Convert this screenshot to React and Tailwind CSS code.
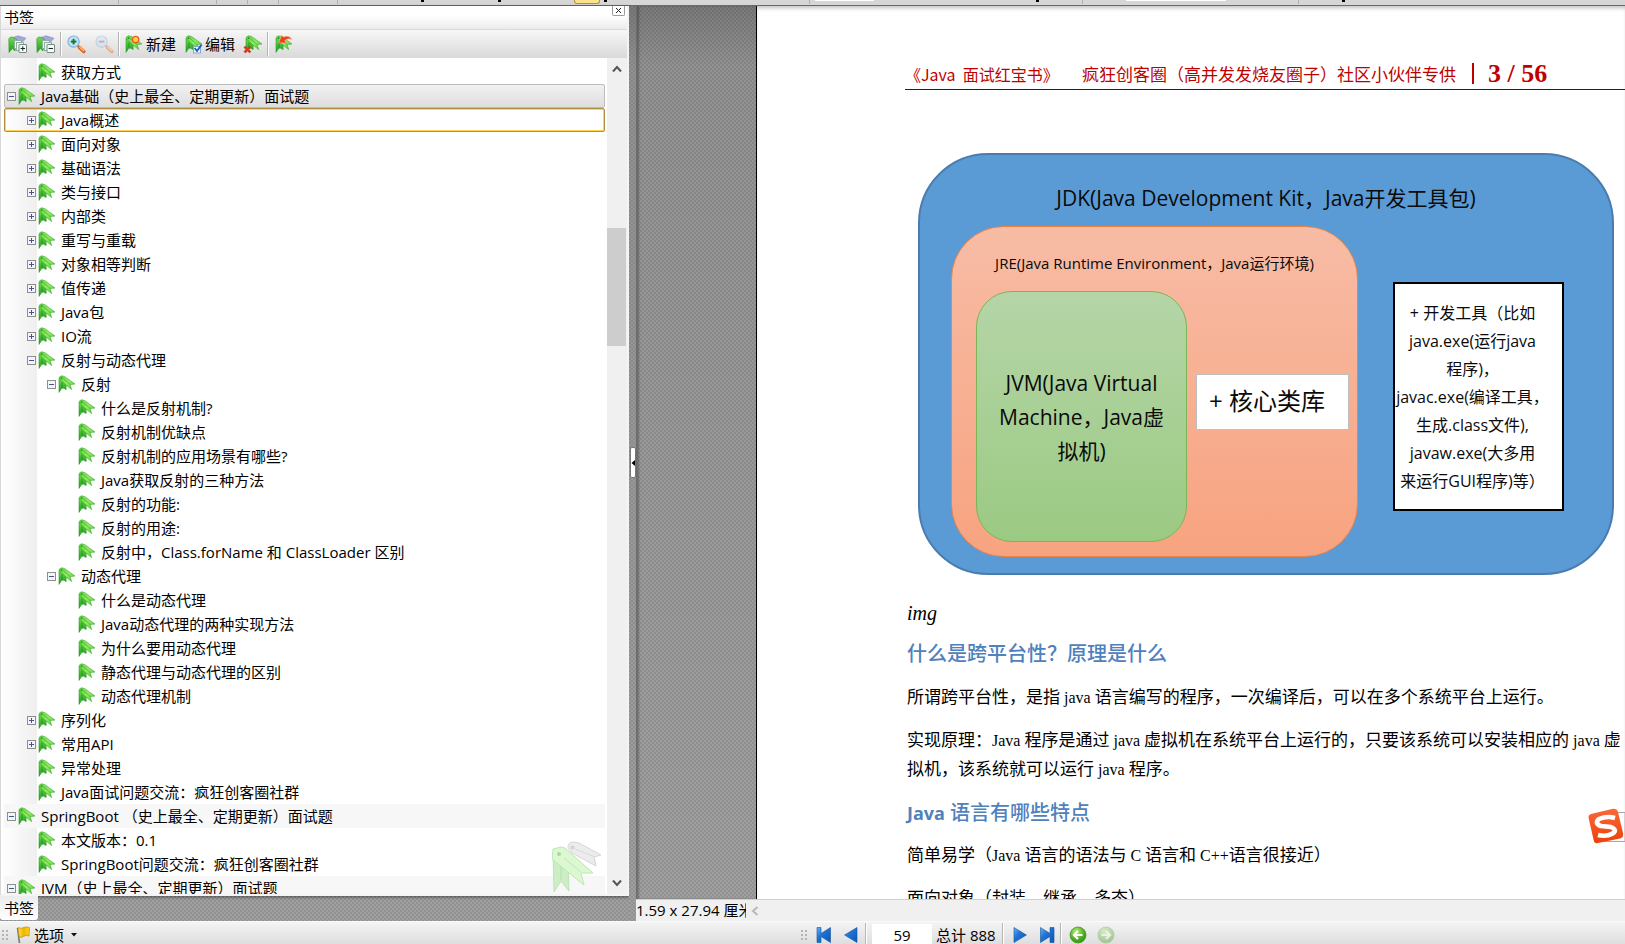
import React from "react";

const TREE = [
  [1, "", "获取方式"],
  [0, "-", "Java基础（史上最全、定期更新）面试题", "current"],
  [1, "+", "Java概述", "focus"],
  [1, "+", "面向对象"],
  [1, "+", "基础语法"],
  [1, "+", "类与接口"],
  [1, "+", "内部类"],
  [1, "+", "重写与重载"],
  [1, "+", "对象相等判断"],
  [1, "+", "值传递"],
  [1, "+", "Java包"],
  [1, "+", "IO流"],
  [1, "-", "反射与动态代理"],
  [2, "-", "反射"],
  [3, "", "什么是反射机制?"],
  [3, "", "反射机制优缺点"],
  [3, "", "反射机制的应用场景有哪些?"],
  [3, "", "Java获取反射的三种方法"],
  [3, "", "反射的功能:"],
  [3, "", "反射的用途:"],
  [3, "", "反射中，Class.forName 和 ClassLoader 区别"],
  [2, "-", "动态代理"],
  [3, "", "什么是动态代理"],
  [3, "", "Java动态代理的两种实现方法"],
  [3, "", "为什么要用动态代理"],
  [3, "", "静态代理与动态代理的区别"],
  [3, "", "动态代理机制"],
  [1, "+", "序列化"],
  [1, "+", "常用API"],
  [1, "", "异常处理"],
  [1, "", "Java面试问题交流：疯狂创客圈社群"],
  [0, "-", "SpringBoot （史上最全、定期更新）面试题"],
  [1, "", "本文版本：0.1"],
  [1, "", "SpringBoot问题交流：疯狂创客圈社群"],
  [0, "-", "JVM（史上最全、定期更新）面试题"],
];

const INDENT = ["pl-[2px]", "pl-[22px]", "pl-[42px]", "pl-[62px]"];

const TEXTURE =
  "bg-[radial-gradient(circle_at_1px_1px,#00000018_1px,transparent_1px),radial-gradient(circle_at_3px_3px,#00000018_1px,transparent_1px),linear-gradient(#7a7a7a,#929292_60px,#a0a0a0)] bg-[length:4px_4px,4px_4px,100%_100%]";

function Defs() {
  return (
    <svg width="0" height="0" className="absolute" aria-hidden="true">
      <defs>
        <linearGradient id="gTop" x1="0" y1="0" x2="1" y2="1">
          <stop offset="0" stopColor="#5ccf3c" />
          <stop offset=".5" stopColor="#8fec62" />
          <stop offset="1" stopColor="#4cc233" />
        </linearGradient>
        <linearGradient id="gDown" x1="0" y1="0" x2="0" y2="1">
          <stop offset="0" stopColor="#74dd4e" />
          <stop offset="1" stopColor="#189a1c" />
        </linearGradient>
        <linearGradient id="gBlue" x1="0" y1="0" x2="1" y2="1">
          <stop offset="0" stopColor="#6fb2f4" />
          <stop offset=".4" stopColor="#1f74d6" />
          <stop offset="1" stopColor="#0f55b4" />
        </linearGradient>
        <linearGradient id="gFlag" x1="0" y1="0" x2="1" y2="0">
          <stop offset="0" stopColor="#ffe34a" />
          <stop offset=".5" stopColor="#f0b400" />
          <stop offset="1" stopColor="#ffd21c" />
        </linearGradient>
        <radialGradient id="gGreen" cx=".4" cy=".3" r=".8">
          <stop offset="0" stopColor="#b9ee7c" />
          <stop offset=".6" stopColor="#4cae1e" />
          <stop offset="1" stopColor="#2d8a10" />
        </radialGradient>
        <linearGradient id="gSogou" x1="0" y1="0" x2="0" y2="1">
          <stop offset="0" stopColor="#f8693a" />
          <stop offset="1" stopColor="#ee4108" />
        </linearGradient>
      </defs>
    </svg>
  );
}

function Ribbons() {
  return (
    <g>
      <path d="M1 3.4 L8 8.6 L8.2 14.6 L5.6 13.2 L3.8 13.2 L1 17.4 Z" fill="url(#gDown)" stroke="#2f9a2b" strokeWidth=".6" />
      <path d="M4 7.4 V12.6" stroke="#0e7a14" strokeWidth=".6" />
      <path d="M1 3.6 Q1 1.4 3.6 .8 L6.4 1.4 L17 9 L12.2 9.6 L13.6 14.6 L8 10 Z" fill="url(#gTop)" stroke="#3aa82e" strokeWidth=".6" />
      <path d="M5.4 3.8 L12 9.4" stroke="#38a52e" strokeWidth=".6" />
      <circle cx="3.6" cy="3.2" r=".9" fill="#2c8f26" />
    </g>
  );
}

function Bookmark() {
  return (
    <svg viewBox="0 0 18 18" className="h-[18px] w-[18px] shrink-0" aria-hidden="true">
      <Ribbons />
    </svg>
  );
}

function TreeBookmark({ minus }) {
  return (
    <svg viewBox="0 0 19 19" className="h-[19px] w-[19px] shrink-0" aria-hidden="true">
      <path d="M5 2.4 L10 .8 L18 3.2 L15 6.4 L9 5.6 Z" fill="#a3a6dd" stroke="#7c7fc0" strokeWidth=".5" />
      <path d="M.8 4 Q1.4 1.8 4 2 L8 4 L11 7 L8 9 L7 16 L4.4 13.6 L1 17.6 Z" fill="url(#gDown)" stroke="#2f9a2b" strokeWidth=".6" />
      <rect x="6.5" y="5.5" width="7" height="8" fill="#f0f5f3" stroke="#8fb09f" />
      <rect x="8.500" y="7.500" width="7" height="8" fill="#f0f5f3" stroke="#8fb09f" />
      <rect x="11" y="9.500" width="7.500" height="8" rx=".5" fill="#f5faf6" stroke="#6d8a86" />
      <path d="M12.600 13.500 H17" stroke="#222" />
      {!minus && <path d="M14.800 11.300 V15.700" stroke="#222" />}
    </svg>
  );
}

function Magnifier({ minus }) {
  return (
    <svg viewBox="0 0 19 19" className={minus ? "h-[19px] w-[19px] opacity-40" : "h-[19px] w-[19px]"} aria-hidden="true">
      <path d="M10.5 10.5 L12.8 12.6" stroke="#8b8b8b" strokeWidth="2" />
      <path d="M12.4 12.4 L16.8 16.6" stroke="#e2601c" strokeWidth="3.4" strokeLinecap="round" />
      <path d="M12.4 11.8 L17 16" stroke="#ffc27a" strokeWidth="1.4" />
      <circle cx="6.6" cy="6.6" r="5.6" fill="#bfe3f8" stroke="#7fb0d8" strokeWidth="1.2" />
      <path d="M3.8 6.6 H9.4" stroke={minus ? "#c8405c" : "#1c7a2b"} strokeWidth="2" />
      {!minus && <path d="M6.6 3.8 V9.4" stroke="#1c7a2b" strokeWidth="2" />}
    </svg>
  );
}

function BadgeBookmark({ kind }) {
  return (
    <svg viewBox="0 0 19 19" className="h-[19px] w-[19px] shrink-0" aria-hidden="true">
      {kind === "delete" ? (
        <g transform="translate(2 0)">
          <Ribbons />
        </g>
      ) : (
        <Ribbons />
      )}
      {kind === "new" && <circle cx="10.6" cy="4.6" r="3.2" fill="#ffd23a" stroke="#ee5a24" strokeWidth="1.4" />}
      {kind === "edit" && (
        <g>
          <rect x="8.5" y="11.5" width="7" height="6.5" fill="#f2f7ff" stroke="#8aa6cc" />
          <path d="M9.600 13 L12 16 L16.600 9.600" stroke="#1b62c8" strokeWidth="1.800" fill="none" />
        </g>
      )}
      {kind === "delete" && <path d="M1.400 11.600 L7.400 17.400 M7.400 11.600 L1.400 17.400" stroke="#e2351a" strokeWidth="2.600" />}
      {kind === "move" && (
        <path d="M17 4.600 Q14 -.4 8.600 2 L6.800 .4 L3.600 7.800 L11.400 8 L9.800 5.400 Q13.400 2.600 17 4.600 Z" fill="#e9431d" stroke="#fbb49c" strokeWidth=".6" />
      )}
    </svg>
  );
}

function Sep() {
  return <span className="box-content h-6 w-px shrink-0 border-r border-white bg-[#b5b5b5]" />;
}

function Grip() {
  return (
    <svg viewBox="0 0 8 12" className="h-3 w-2 shrink-0" aria-hidden="true">
      {[1, 5, 9].map((y) => (
        <g key={y}>
          <rect x="0" y={y} width="2" height="2" fill="#b4b4b4" />
          <rect x="4" y={y} width="2" height="2" fill="#b4b4b4" />
        </g>
      ))}
    </svg>
  );
}

function Expander({ sign, name }) {
  return (
    <button aria-label={(sign === "+" ? "展开 " : "折叠 ") + name} className="flex h-[9px] w-[9px] shrink-0 items-center justify-center border border-[#8e8e8e] bg-[#f4f4f4]">
      <svg viewBox="0 0 7 7" className="h-[7px] w-[7px]" aria-hidden="true">
        <path d={sign === "+" ? "M1 3.5H6M3.5 1V6" : "M1 3.5H6"} stroke="#3c55a0" />
      </svg>
    </button>
  );
}

function TreeRow({ level, sign, label, state }) {
  const skin =
    state === "current"
      ? "rounded-[2px] border border-[#bcbcbc] bg-linear-to-b from-[#f1f1f1] to-[#dedede]"
      : state === "focus"
      ? "rounded-[2px] border border-[#b08f3c] bg-white bg-linear-to-r from-white to-[#efefef] bg-[length:32px_100%] bg-no-repeat shadow-[inset_0_0_0_1px_#ffd455]"
      : level === 0
      ? "border border-transparent bg-[#f7f7f7]"
      : "border border-transparent";
  return (
    <li className={"flex h-6 items-center overflow-hidden whitespace-nowrap " + skin + " " + INDENT[level]}>
      <span className="flex w-[11px] shrink-0 items-center">{sign && <Expander sign={sign} name={label} />}</span>
      <Bookmark />
      <a href="#" className="ml-[5px] leading-6">
        {label}
      </a>
    </li>
  );
}

function TopStrip() {
  const sep = "w-px bg-[#b0b0b0]";
  const arrow = "h-[2px] w-[3px] bg-black";
  return (
    <div className="flex h-[6px] shrink-0 items-start border-b border-[#6a6a6a] bg-[#d6d6d6]">
      <div className="flex h-[5px] w-[740px] shrink-0 items-start">
        <span className={"ml-[118px] h-1 " + sep} />
        <span className={"ml-[97px] h-1 " + sep} />
        <span className={"ml-[30px] h-1 " + sep} />
        <span className={"ml-[30px] h-1 " + sep} />
        <span className={"ml-[58px] h-1 " + sep} />
        <span className={"ml-[83px] " + arrow} />
        <span className={"ml-[74px] " + arrow} />
        <span className="ml-[73px] h-1 w-[26px] rounded-b-[3px] border border-t-0 border-[#b0903c] bg-[#fbe38c]" />
        <span className={"ml-[4px] " + arrow} />
      </div>
      <span className={"ml-[69px] h-1 " + sep} />
      <span className="ml-[5px] h-px w-[59px] bg-white" />
      <span className={"ml-[162px] " + arrow} />
      <span className={"ml-[43px] h-1 " + sep} />
      <span className="ml-[43px] h-px w-[100px] bg-white" />
      <span className={"ml-[72px] h-1 " + sep} />
      <span className={"ml-[43px] " + arrow} />
    </div>
  );
}

function BookmarkPanel() {
  return (
    <aside className={"flex w-[629px] shrink-0 flex-col " + TEXTURE}>
      <div className="flex min-h-0 flex-1 flex-col border-r-2 border-b-2 border-l border-[#f4f4f4] border-l-[#d8d8d8] bg-white shadow-[0_1px_3px_#00000080]">
        <header className="flex h-[24px] shrink-0 items-start justify-between border-b border-[#dadada] bg-linear-to-b from-white from-40% to-[#ececec] pr-[2px] pl-[3px]">
          <h2 className="leading-[22px]">书签</h2>
          <button aria-label="关闭" className="flex h-[10px] w-[13px] items-center justify-center rounded-b-[2px] border border-t-0 border-[#9c9c9c] bg-white">
            <svg viewBox="0 0 7 7" className="h-[7px] w-[7px]" aria-hidden="true">
              <path d="M1 1 L6 6 M6 1 L1 6" stroke="#222" />
            </svg>
          </button>
        </header>

        <div className="flex h-[28px] shrink-0 items-center bg-linear-to-b from-[#f7f7f7] to-[#d9d9d9] pl-[7px]">
          <button aria-label="展开全部"><TreeBookmark /></button>
          <button aria-label="折叠全部" className="ml-[9px]"><TreeBookmark minus /></button>
          <span className="ml-[5px] flex"><Sep /></span>
          <button aria-label="放大" className="ml-[5px]"><Magnifier /></button>
          <button aria-label="缩小" className="ml-[9px]"><Magnifier minus /></button>
          <span className="ml-[4px] flex"><Sep /></span>
          <button className="ml-[5px] flex items-center gap-[2px]"><BadgeBookmark kind="new" />新建</button>
          <button className="ml-[9px] flex items-center gap-[1px]"><BadgeBookmark kind="edit" />编辑</button>
          <button aria-label="删除" className="ml-[8px]"><BadgeBookmark kind="delete" /></button>
          <span className="ml-[5px] flex"><Sep /></span>
          <button aria-label="移动" className="ml-[6px]"><BadgeBookmark kind="move" /></button>
        </div>

        <div className="relative flex min-h-0 flex-1 overflow-hidden bg-[linear-gradient(90deg,#fff,#efefef)] bg-[length:36px_100%] bg-no-repeat">
          <ul className="min-w-0 flex-1 pt-[2px] pr-[2px] pl-[3px]">
            {TREE.map(([level, sign, label, state]) => (
              <TreeRow key={label} level={level} sign={sign} label={label} state={state} />
            ))}
          </ul>
          <svg viewBox="0 0 50 52" className="absolute right-[25px] bottom-[1px] h-[52px] w-[50px]" aria-hidden="true">
            <path d="M16 7 Q16 1 21 1 L27 2 L49 14 L42 16 L44 25 L31 18 L20 12 Z" fill="#ececec" stroke="#d6d6d6" />
            <path d="M23 8 L43 16" stroke="#d9d9d9" />
            <circle cx="20.500" cy="6.500" r="2" fill="#d2d2d2" />
            <path d="M1 12 L16 20 L17 50 L9 40 L2 51 Z" fill="#cdeec5" stroke="#bfe3b7" />
            <path d="M9 24 V39" stroke="#b5dfac" />
            <path d="M0 18 L1 8 L9 6 L13 7 L41 32 L29 32 L32 44 L17 32 Z" fill="#dcf8d2" stroke="#bfe6b4" />
            <path d="M12 17 L29 31" stroke="#bfe6b4" />
            <circle cx="7" cy="13" r="2" fill="#a9d8a2" />
          </svg>
          <div className="flex w-5 shrink-0 flex-col items-center bg-[#f0f0f0]">
            <button aria-label="向上滚动" className="flex h-[22px] w-full shrink-0 items-center justify-center">
              <svg viewBox="0 0 10 8" className="h-2 w-[10px]" aria-hidden="true"><path d="M1 6.500 L5 2 L9 6.500" fill="none" stroke="#555" strokeWidth="2" /></svg>
            </button>
            <div className="flex min-h-0 w-full flex-1 flex-col pr-px">
              <span className="basis-[148px]" />
              <span className="h-[118px] w-full bg-[#cdcdcd]" />
            </div>
            <button aria-label="向下滚动" className="flex h-[22px] w-full shrink-0 items-center justify-center">
              <svg viewBox="0 0 10 8" className="h-2 w-[10px]" aria-hidden="true"><path d="M1 1.500 L5 6 L9 1.500" fill="none" stroke="#555" strokeWidth="2" /></svg>
            </button>
          </div>
        </div>
      </div>
      <div className="h-[25px] shrink-0">
        <button className="h-6 rounded-b-[3px] bg-linear-to-b from-[#ececec] to-white px-1 leading-6">书签</button>
      </div>
    </aside>
  );
}

function Diagram() {
  return (
    <figure className="ml-[11px] h-[422px] w-[696px] rounded-[70px] border-2 border-[#4a7cb0] bg-[#5b9bd5] pt-[29px] text-[#0a0a0a]">
      <figcaption className="text-center text-[21px] leading-[28px]">JDK(Java Development Kit，Java开发工具包)</figcaption>
      <div className="mt-[14px] flex items-start">
        <section className="ml-[31px] h-[331px] w-[407px] rounded-[53px] border border-[#ee8345] bg-linear-to-b from-[#f7bca5] to-[#f7a380]">
          <h3 className="pt-[24px] text-center text-[15px] leading-[24px]">JRE(Java Runtime Environment，Java运行环境)</h3>
          <div className="mt-[16px] flex items-start">
            <div className="ml-[24px] flex h-[251px] w-[211px] items-center justify-center rounded-[36px] border border-[#7ab656] bg-linear-to-b from-[#b5d5a7] to-[#9bca83]">
              <p className="text-center text-[21px] leading-[34px]">
                JVM(Java Virtual<br />Machine，Java虚<br />拟机)
              </p>
            </div>
            <p className="mt-[83px] ml-[9px] h-[56px] w-[153px] border border-[#bfbfbf] bg-white pl-[12px] text-[24px] leading-[52px]">+ 核心类库</p>
          </div>
        </section>
        <p className="mt-[56px] ml-[35px] h-[229px] w-[171px] border-2 border-black bg-white pt-[15px] pr-[12px] text-center text-[16px] leading-[28px] whitespace-nowrap">
          + 开发工具（比如<br />java.exe(运行java<br />程序)，<br />javac.exe(编译工具，<br />生成.class文件),<br />javaw.exe(大多用<br />来运行GUI程序)等）
        </p>
      </div>
    </figure>
  );
}

function Latin({ children }) {
  return <span className="text-[16px]"> {children} </span>;
}

function Page() {
  const body = "text-[17px] leading-[29px]";
  const heading = "text-[20px] leading-[28px] font-medium text-[#4f81bd]";
  return (
    <article className="min-w-0 flex-1 overflow-hidden border-l border-black bg-white pt-[50px] font-['Liberation_Serif','Noto_Sans_CJK_SC',serif] whitespace-nowrap text-black shadow-[inset_0_4px_4px_-2px_#00000040]">
      <header className="ml-[148px] flex h-[34px] items-center border-b border-[#222] pt-[2px] font-['Noto_Sans_CJK_SC',sans-serif] text-[16px] text-[#c00000]">
        <span className="w-[177px]">《Java&nbsp; 面试红宝书》</span>
        <span className="w-[390px] text-[17px]">疯狂创客圈（高并发发烧友圈子）社区小伙伴专供</span>
        <span className="h-[21px] w-[2px] bg-[#c00000]" />
        <span className="ml-[14px] font-['Liberation_Serif',serif] text-[26px] leading-[30px] font-bold">3 / 56</span>
      </header>
      <div className="mt-[63px] ml-[150px]">
        <div className="font-['Open_Sans','Noto_Sans_CJK_SC',sans-serif]">
          <Diagram />
        </div>
        <p className="mt-[24px] text-[20px] leading-[28px] italic">img</p>
        <h2 className={"mt-[13px] " + heading}>什么是跨平台性？原理是什么</h2>
        <p className={"mt-[15px] " + body}>所谓跨平台性，是指<Latin>java</Latin>语言编写的程序，一次编译后，可以在多个系统平台上运行。</p>
        <p className={"mt-[14px] " + body}>
          实现原理：<span className="text-[16px]">Java </span>程序是通过<Latin>java</Latin>虚拟机在系统平台上运行的，只要该系统可以安装相应的<Latin>java</Latin>虚<br />拟机，该系统就可以运行<Latin>java</Latin>程序。
        </p>
        <h2 className={"mt-[15px] " + heading}>
          <span className="font-['Open_Sans',sans-serif] text-[18px] font-bold">Java</span> 语言有哪些特点
        </h2>
        <p className={"mt-[14px] " + body}>简单易学（<span className="text-[16px]">Java </span>语言的语法与<Latin>C</Latin>语言和<span className="text-[16px]"> C++</span>语言很接近）</p>
        <p className={"mt-[14px] " + body}>面向对象（封装，继承，多态）</p>
      </div>
    </article>
  );
}

function StatusBar() {
  const tri = { fill: "url(#gBlue)", stroke: "#1450a0", strokeWidth: 0.6 };
  return (
    <footer className="flex h-[23px] shrink-0 items-start overflow-hidden border-t border-[#fafafa] bg-linear-to-b from-[#f4f4f4] to-[#dedede] pt-px">
      <div className="flex h-6 w-[801px] shrink-0 items-center pl-[2px]">
        <Grip />
        <button className="ml-[5px] flex items-center">
          <svg viewBox="0 0 16 18" className="h-[18px] w-4" aria-hidden="true">
            <path d="M2.500 2 L4.500 17" stroke="#777" strokeWidth="1.600" />
            <path d="M3 1.600 Q6 3 8.500 1.600 T14.500 1.600 L14 10 Q11 8.600 8.500 10.400 T4 10.600 Z" fill="url(#gFlag)" stroke="#b98d10" strokeWidth=".7" />
          </svg>
          <span className="ml-[3px]">选项</span>
          <svg viewBox="0 0 6 4" className="ml-[7px] h-1 w-[6px]" aria-hidden="true"><path d="M0 0 H6 L3 3.500 Z" fill="#111" /></svg>
        </button>
      </div>
      <div className="flex h-6 items-center">
        <Grip />
        <button aria-label="第一页" className="ml-[7px]">
          <svg viewBox="0 0 16 18" className="h-[18px] w-4" aria-hidden="true"><path d="M1 1.500 H5 V7.500 L14.500 1.500 V16.500 L5 10.500 V16.500 H1 Z" {...tri} /></svg>
        </button>
        <button aria-label="上一页" className="ml-[12px]">
          <svg viewBox="0 0 14 18" className="h-[18px] w-[14px]" aria-hidden="true"><path d="M13 1.500 V16.500 L.6 9 Z" {...tri} /></svg>
        </button>
        <span className="ml-[7px] flex"><Sep /></span>
        <input aria-label="页码" defaultValue="59" className="ml-[5px] h-[22px] w-[60px] bg-white text-center" />
        <span className="ml-[4px] w-[66px] whitespace-nowrap">总计 888</span>
        <Sep />
        <button aria-label="下一页" className="ml-[9px]">
          <svg viewBox="0 0 14 18" className="h-[18px] w-[14px]" aria-hidden="true"><path d="M1 1.500 V16.500 L13.400 9 Z" {...tri} /></svg>
        </button>
        <button aria-label="最后一页" className="ml-[12px]">
          <svg viewBox="0 0 16 18" className="h-[18px] w-4" aria-hidden="true"><path d="M15 1.500 H11 V7.500 L1.500 1.500 V16.500 L11 10.500 V16.500 H15 Z" {...tri} /></svg>
        </button>
        <span className="ml-[5px] flex"><Sep /></span>
        <button aria-label="后退" className="ml-[7px]">
          <svg viewBox="0 0 18 18" className="h-[18px] w-[18px]" aria-hidden="true">
            <circle cx="9" cy="9" r="8" fill="url(#gGreen)" stroke="#3f8f20" strokeWidth=".7" />
            <path d="M13.500 9 H5.500 M9 5 L5 9 L9 13" fill="none" stroke="#fff" strokeWidth="2.200" />
          </svg>
        </button>
        <button aria-label="前进" className="ml-[10px] opacity-35">
          <svg viewBox="0 0 18 18" className="h-[18px] w-[18px]" aria-hidden="true">
            <circle cx="9" cy="9" r="8" fill="url(#gGreen)" stroke="#3f8f20" strokeWidth=".7" />
            <path d="M4.500 9 H12.500 M9 5 L13 9 L9 13" fill="none" stroke="#fff" strokeWidth="2.200" />
          </svg>
        </button>
      </div>
    </footer>
  );
}

export default function App() {
  return (
    <div className="relative flex h-screen flex-col overflow-hidden bg-[#a0a0a0] font-['Open_Sans','Noto_Sans_CJK_SC',sans-serif] text-[15px] text-black">
      <Defs />
      <TopStrip />
      <main className="flex min-h-0 flex-1">
        <BookmarkPanel />
        <div className={"flex w-[7px] shrink-0 flex-col items-center pt-[441px] " + TEXTURE}>
          <button aria-label="收起面板" className="flex h-[31px] w-[6px] items-center justify-center rounded-[2px] border border-[#777] bg-white">
            <svg viewBox="0 0 4 6" className="h-[6px] w-1" aria-hidden="true"><path d="M4 0 V6 L.5 3 Z" fill="#000" /></svg>
          </button>
        </div>
        <div className="flex min-w-0 flex-1 flex-col">
          <div className={"flex min-h-0 flex-1 " + TEXTURE}>
            <div className="w-[120px] shrink-0 border-l border-[#6c6c6c] shadow-[inset_2px_0_2px_#00000040]" />
            <Page />
          </div>
          <div className="flex h-[22px] shrink-0 items-center border-t border-[#d0d0d0] bg-[#f0f0f0]">
            <span className="w-[110px] shrink-0 overflow-hidden leading-[21px] whitespace-nowrap">1.59 x 27.94 厘米</span>
            <button aria-label="向左滚动" className="ml-[5px]">
              <svg viewBox="0 0 8 10" className="h-[10px] w-2" aria-hidden="true"><path d="M6.500 1 L2 5 L6.500 9" fill="none" stroke="#b8b8b8" strokeWidth="2" /></svg>
            </button>
          </div>
        </div>
      </main>
      <StatusBar />
      <button aria-label="输入法" className="absolute right-0 bottom-[100px] flex h-[36px] w-[37px] items-center">
        <svg viewBox="0 0 37 36" className="h-[36px] w-[37px]" aria-hidden="true">
          <path d="M22 4.500 H37 V33.500 H10" fill="#fff" stroke="#a8a8a8" />
          <path d="M3 6 L24 1 Q29 .2 30 4 L35 25 Q36 29.500 32 30.500 L10 35 Q6.600 36 5.600 32 L.6 10 Q0 7 3 6 Z" fill="url(#gSogou)" />
          <path d="M27 10 Q19 7.500 11 11 Q6 15.500 13 18 L23 19 Q30 22 24.500 25.600 Q18 29 10 27" fill="none" stroke="#fff" strokeWidth="4.600" />
        </svg>
      </button>
    </div>
  );
}
